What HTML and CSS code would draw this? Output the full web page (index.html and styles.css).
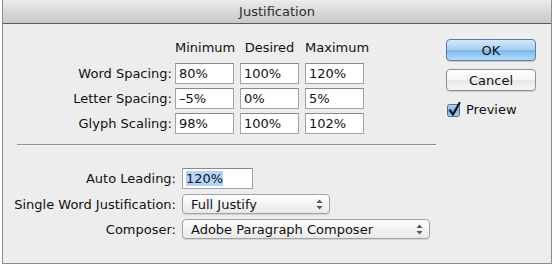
FILE: index.html
```html
<!DOCTYPE html>
<html lang="en">
<head>
    <meta charset="UTF-8">
    <title>Justification</title>
    <link rel="stylesheet" href="styles.css">
</head>
<body>
    <div class="window">
        <div class="titlebar">Justification</div>
        <div class="content">
            <div class="main">
                <!-- Spacing table -->
                <div class="spacing">
                    <span></span>
                    <span class="col-head">Minimum</span>
                    <span class="col-head">Desired</span>
                    <span class="col-head">Maximum</span>

                    <label class="row-label">Word Spacing:</label>
                    <input class="field" type="text" value="80%">
                    <input class="field" type="text" value="100%">
                    <input class="field" type="text" value="120%">

                    <label class="row-label">Letter Spacing:</label>
                    <input class="field" type="text" value="–5%">
                    <input class="field" type="text" value="0%">
                    <input class="field" type="text" value="5%">

                    <label class="row-label">Glyph Scaling:</label>
                    <input class="field" type="text" value="98%">
                    <input class="field" type="text" value="100%">
                    <input class="field" type="text" value="102%">
                </div>
                <div class="separator"></div>
                <!-- Other options -->
                <div class="options">
                    <label class="row-label">Auto Leading:</label>
                    <div class="field leading"><span class="selected">120%</span></div>

                    <label class="row-label">Single Word Justification:</label>
                    <div class="popup short">
                        <span>Full Justify</span>
                        <svg class="arrows" width="7" height="11" viewBox="0 0 7 11"><path d="M3.5 0.5 L6.5 4 L0.5 4 Z M0.5 7 L6.5 7 L3.5 10.5 Z" fill="#555"/></svg>
                    </div>

                    <label class="row-label">Composer:</label>
                    <div class="popup long">
                        <span>Adobe Paragraph Composer</span>
                        <svg class="arrows" width="7" height="11" viewBox="0 0 7 11"><path d="M3.5 0.5 L6.5 4 L0.5 4 Z M0.5 7 L6.5 7 L3.5 10.5 Z" fill="#555"/></svg>
                    </div>
                </div>
            </div>
            <div class="actions">
                <button class="btn default">OK</button>
                <button class="btn">Cancel</button>
                <label class="check">
                    <svg width="15" height="15" viewBox="0 0 15 15">
                        <defs>
                            <linearGradient id="cb" x1="0" y1="0" x2="0" y2="1">
                                <stop offset="0" stop-color="#bcd8f4"/>
                                <stop offset="0.5" stop-color="#7fb3e8"/>
                                <stop offset="1" stop-color="#a9d0f5"/>
                            </linearGradient>
                        </defs>
                        <rect x="0.5" y="2.5" width="12" height="12" rx="2" fill="url(#cb)" stroke="#4d6f9c"/>
                        <path d="M3 8.5 L6 12.5 L12.5 1" fill="none" stroke="#111" stroke-width="2.2" stroke-linecap="round" stroke-linejoin="round"/>
                    </svg>
                    Preview
                </label>
            </div>
        </div>
    </div>
</body>
</html>
```

FILE: styles.css
```css
:root {
    --bg: #ededed;
    --text: #111;
    --border: #8c8c8c;
    --field-border: #a3a3a3;
}
body {
    margin: 0;
    background: #fff;
    font-family: 'DejaVu Sans', Arial, sans-serif;
    font-size: 13px;
    color: var(--text);
}
.window {
    width: 548px;
    height: 263px;
    margin: 0 2px;
    border: 1px solid var(--border);
    border-top: none;
    background: var(--bg);
    display: flex;
    flex-direction: column;
}
.titlebar {
    height: 23px;
    line-height: 24px;
    text-align: center;
    font-size: 13px;
    color: #2c2c2c;
    background: linear-gradient(#ebebeb, #d6d6d6 60%, #c9c9c9);
    border-bottom: 1px solid #5a5a5a;
    border-radius: 4px 4px 0 0;
}
.content {
    flex: 1;
    display: flex;
}
.main {
    width: 437px;
}
.spacing {
    display: grid;
    grid-template-columns: 169px 62px 65px 65px;
    row-gap: 4px;
    margin-top: 16px;
    align-items: center;
}
.col-head {
    justify-self: end;
    width: 59px;
    text-align: center;
    line-height: 16px;
    margin-bottom: 3px;
    white-space: nowrap;
}
.row-label {
    text-align: right;
    white-space: nowrap;
}
.field {
    box-sizing: border-box;
    justify-self: end;
    height: 21px;
    width: 59px;
    margin: 0;
    padding: 0 3px;
    border: 1px solid var(--field-border);
    border-top-color: #8a8a8a;
    background: #fff;
    font: inherit;
    color: var(--text);
    outline: none;
    display: flex;
    align-items: center;
}
.separator {
    margin: 10px 4px 0 14px;
    border-top: 1px solid #8e8e8e;
    border-bottom: 1px solid #f8f8f8;
}
.options {
    display: grid;
    grid-template-columns: 176px auto;
    column-gap: 3px;
    row-gap: 5px;
    margin-top: 22px;
    align-items: center;
    justify-items: start;
}
.options .row-label {
    justify-self: end;
    padding-right: 3px;
}
.options .field {
    justify-self: start;
}
.leading {
    width: 71px;
}
.selected {
    background: #b4d3f8;
}
.popup {
    box-sizing: border-box;
    height: 20px;
    padding: 0 6px 0 8px;
    border: 1px solid #a2a2a2;
    border-radius: 4px;
    background: linear-gradient(#ffffff, #f3f3f3 50%, #e9e9e9);
    box-shadow: 0 1px 1px rgba(0, 0, 0, 0.12);
    display: flex;
    align-items: center;
    justify-content: space-between;
}
.popup.short {
    width: 148px;
}
.popup.long {
    width: 248px;
}
.actions {
    padding: 15px 0 0 6px;
    width: 90px;
    display: flex;
    flex-direction: column;
}
.btn {
    height: 22px;
    width: 90px;
    margin: 0 0 8px 0;
    padding: 0;
    border: 1px solid #8f8f8f;
    border-radius: 4px;
    background: linear-gradient(#ffffff, #f4f4f4 50%, #e6e6e6 51%, #f6f6f6);
    font: inherit;
    font-size: 13px;
    color: var(--text);
    box-shadow: 0 1px 1px rgba(0, 0, 0, 0.15);
}
.btn.default {
    border-color: #5a7ca8;
    background: linear-gradient(#d4e8fb, #a6cdf3 50%, #7db6ec 51%, #b3daf9);
}
.check {
    display: flex;
    align-items: center;
    gap: 4px;
    margin: 3px 0 0 1px;
    font-size: 13px;
}
```
